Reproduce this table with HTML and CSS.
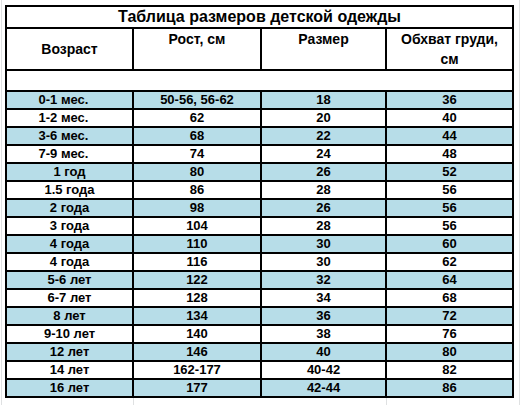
FILE: index.html
```html
<!DOCTYPE html>
<html lang="ru">
<head>
<meta charset="utf-8">
<title>Таблица размеров детской одежды</title>
<link rel="stylesheet" href="styles.css">
</head>
<body>
<div class="sheet">
  <div class="cell title">Таблица размеров детской одежды</div>
  <div class="cell head mid">Возраст</div>
  <div class="cell head">Рост, см</div>
  <div class="cell head">Размер</div>
  <div class="cell head">Обхват груди,<br>см</div>
  <div class="cell empty"></div>

  <div class="cell b shift">0-1 мес.</div><div class="cell b">50-56, 56-62</div><div class="cell b">18</div><div class="cell b">36</div>
  <div class="cell shift">1-2 мес.</div><div class="cell">62</div><div class="cell">20</div><div class="cell">40</div>
  <div class="cell b shift">3-6 мес.</div><div class="cell b">68</div><div class="cell b">22</div><div class="cell b">44</div>
  <div class="cell shift">7-9 мес.</div><div class="cell">74</div><div class="cell">24</div><div class="cell">48</div>
  <div class="cell b">1 год</div><div class="cell b">80</div><div class="cell b">26</div><div class="cell b">52</div>
  <div class="cell">1.5 года</div><div class="cell">86</div><div class="cell">28</div><div class="cell">56</div>
  <div class="cell b">2 года</div><div class="cell b">98</div><div class="cell b">26</div><div class="cell b">56</div>
  <div class="cell">3 года</div><div class="cell">104</div><div class="cell">28</div><div class="cell">56</div>
  <div class="cell b">4 года</div><div class="cell b">110</div><div class="cell b">30</div><div class="cell b">60</div>
  <div class="cell">4 года</div><div class="cell">116</div><div class="cell">30</div><div class="cell">62</div>
  <div class="cell b">5-6 лет</div><div class="cell b">122</div><div class="cell b">32</div><div class="cell b">64</div>
  <div class="cell">6-7 лет</div><div class="cell">128</div><div class="cell">34</div><div class="cell">68</div>
  <div class="cell b">8 лет</div><div class="cell b">134</div><div class="cell b">36</div><div class="cell b">72</div>
  <div class="cell">9-10 лет</div><div class="cell">140</div><div class="cell">38</div><div class="cell">76</div>
  <div class="cell b">12 лет</div><div class="cell b">146</div><div class="cell b">40</div><div class="cell b">80</div>
  <div class="cell">14 лет</div><div class="cell">162-177</div><div class="cell">40-42</div><div class="cell">82</div>
  <div class="cell b">16 лет</div><div class="cell b">177</div><div class="cell b">42-44</div><div class="cell b">86</div>
</div>
</body>
</html>
```
FILE: styles.css
```css
html, body {
  margin: 0;
  padding: 0;
}
body {
  padding: 5px 0 0 5px;
  min-height: 405px;
  box-sizing: border-box;
  font-family: "Liberation Sans", Arial, sans-serif;
  font-weight: bold;
  color: #000000;
  background:
    linear-gradient(#dfe1e2, #dfe1e2) 519px 0 / 1px 100% no-repeat,
    linear-gradient(#dfe1e2, #dfe1e2) 1px 0 / 1px 100% no-repeat,
    linear-gradient(#dfe1e2, #dfe1e2) 133px 398px / 1px 20px no-repeat,
    linear-gradient(#dfe1e2, #dfe1e2) 386px 398px / 1px 20px no-repeat,
    #ffffff;
}
.sheet {
  display: grid;
  grid-template-columns: 125px 126px 123px 125px;
  grid-template-rows: 20px 40px 19px repeat(17, 16px);
  gap: 2px;
  padding: 2px;
  background: #000000;
  width: max-content;
}
.cell {
  background: #ffffff;
  display: flex;
  align-items: center;
  justify-content: center;
  text-align: center;
  font-size: 13px;
  line-height: 16px;
  white-space: nowrap;
}
.cell.b {
  background: #b7dde8;
}
.shift {
  padding-right: 12px;
}
.title {
  grid-column: 1 / -1;
  font-size: 16px;
  line-height: 20px;
}
.head {
  align-items: flex-start;
  font-size: 14px;
  line-height: 20px;
}
.head.mid {
  align-items: center;
}
.empty {
  grid-column: 1 / -1;
}
```
